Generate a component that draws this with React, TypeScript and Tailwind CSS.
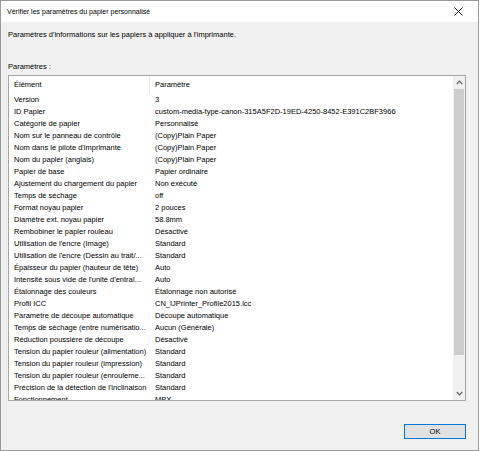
import React from 'react';

const rows: [string, string][] = [
    ['Version', '3'],
    ['ID Papier', 'custom-media-type-canon-315A5F2D-19ED-4250-8452-E391C2BF3966'],
    ['Catégorie de papier', 'Personnalisé'],
    ['Nom sur le panneau de contrôle', '(Copy)Plain Paper'],
    ["Nom dans le pilote d'imprimante", '(Copy)Plain Paper'],
    ['Nom du papier (anglais)', '(Copy)Plain Paper'],
    ['Papier de base', 'Papier ordinaire'],
    ['Ajustement du chargement du papier', 'Non exécuté'],
    ['Temps de séchage', 'off'],
    ['Format noyau papier', '2 pouces'],
    ['Diamètre ext. noyau papier', '58.8mm'],
    ['Rembobiner le papier rouleau', 'Désactivé'],
    ["Utilisation de l'encre (Image)", 'Standard'],
    ["Utilisation de l'encre (Dessin au trait/...", 'Standard'],
    ['Épaisseur du papier (hauteur de tête)', 'Auto'],
    ["Intensité sous vide de l'unité d'entraî...", 'Auto'],
    ['Étalonnage des couleurs', 'Étalonnage non autorisé'],
    ['Profil ICC', 'CN_IJPrinter_Profile2015.icc'],
    ['Paramètre de découpe automatique', 'Découpe automatique'],
    ['Temps de séchage (entre numérisatio...', 'Aucun (Générale)'],
    ['Réduction poussière de découpe', 'Désactivé'],
    ['Tension du papier rouleur (alimentation)', 'Standard'],
    ['Tension du papier rouleur (impression)', 'Standard'],
    ['Tension du papier rouleur (enrouleme...', 'Standard'],
    ["Précision de la détection de l'inclinaison", 'Standard'],
    ['Fonctionnement', 'MPX'],
];

const Chevron = ({ up }: { up?: boolean }) => (
    <svg width="7" height="5" viewBox="0 0 7 5" className="block">
        <path
            d={up ? 'M0.8 4 L3.5 1.2 L6.2 4' : 'M0.8 1 L3.5 3.8 L6.2 1'}
            fill="none"
            stroke="#606060"
            strokeWidth="1.2"
        />
    </svg>
);

export default function App() {
    return (
        <div
            className="w-[479px] h-[451px] border border-[#9a9a9a] bg-[#f0f0f0] flex flex-col text-[7.5px] text-black overflow-hidden"
            style={{ fontFamily: '"Liberation Sans", Arial, sans-serif' }}
        >
            {/* Title bar */}
            <div className="h-[21px] bg-white flex items-center pl-[6px] pr-[15px] shrink-0">
                <span className="flex-1 leading-none text-[7px]">Vérifier les paramètres du papier personnalisé</span>
                <svg width="9" height="9" viewBox="0 0 9 9">
                    <path d="M0.5 0.5 L8.5 8.5 M8.5 0.5 L0.5 8.5" stroke="#222" strokeWidth="1" />
                </svg>
            </div>

            <div className="flex flex-col px-[7px]">
                <div className="mt-[7px] h-[12px] leading-[12px]">
                    Paramètres d'informations sur les papiers à appliquer à l'imprimante.
                </div>
                <div className="mt-[20px] h-[12px] leading-[12px]">Paramètres :</div>

                {/* List box */}
                <div className="mt-[2px] w-[458px] h-[326px] border border-[#a5a5a5] bg-white flex overflow-hidden">
                    <div className="flex-1 flex flex-col overflow-hidden">
                        <div className="h-[18px] flex items-center shrink-0">
                            <div className="w-[141px] pl-[5px] h-full flex items-center border-r border-[#ececec]">Élément</div>
                            <div className="pl-[5px]">Paramètre</div>
                        </div>
                        {rows.map(([k, v], i) => (
                            <div key={i} className="h-[12px] leading-[12px] flex shrink-0 whitespace-nowrap">
                                <div className="w-[141px] pl-[5px] overflow-hidden">{k}</div>
                                <div className="pl-[5px]">{v}</div>
                            </div>
                        ))}
                    </div>

                    {/* Scrollbar */}
                    <div className="w-[12px] h-full bg-[#f0f0f0] flex flex-col items-center">
                        <div className="h-[13px] flex items-center justify-center">
                            <Chevron up />
                        </div>
                        <div className="w-[10px] h-[266px] bg-[#cdcdcd]" />
                        <div className="flex-1" />
                        <div className="h-[13px] flex items-center justify-center">
                            <Chevron />
                        </div>
                    </div>
                </div>

                {/* Footer */}
                <div className="mt-[23px] w-[458px] flex justify-end">
                    <button className="w-[62px] h-[15px] border border-[#0078d7] bg-[#e1e1e1] flex items-center justify-center leading-none text-[7.5px]">
                        OK
                    </button>
                </div>
            </div>
        </div>
    );
}
